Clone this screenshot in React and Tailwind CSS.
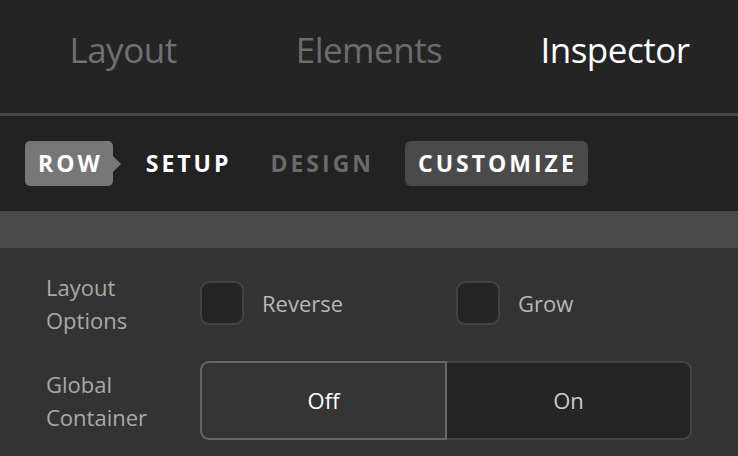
export default function App() {
  const font = { fontFamily: '"Open Sans", "Liberation Sans", sans-serif' };
  return (
    <div className="w-[738px] h-[456px] overflow-hidden bg-[#333333] flex flex-col" style={font}>
      {/* top navigation */}
      <div className="h-[113px] bg-[#242424] grid grid-cols-3 items-start pt-[26px]">
        <div className="text-center text-[35px] leading-[48px] tracking-[-0.5px] text-[#707070]">Layout</div>
        <div className="text-center text-[35px] leading-[48px] tracking-[-0.5px] text-[#6c6c6c]">Elements</div>
        <div className="text-center text-[35px] leading-[48px] tracking-[-0.5px] text-white">Inspector</div>
      </div>
      <div className="h-[3px] bg-[#474747]" />

      {/* breadcrumb / sub tabs */}
      <div className="h-[95px] bg-[#222222] flex items-center pl-[25px]">
        <div className="relative h-[45px] flex items-center rounded-[5px] bg-[#777777] pl-[13px] pr-[10px]">
          <span className="text-[23px] font-bold tracking-[3px] text-white">ROW</span>
          <span className="absolute right-[-8px] top-1/2 -translate-y-1/2 w-0 h-0 border-y-[8px] border-y-transparent border-l-[8px] border-l-[#777777]" />
        </div>
        <div className="h-[45px] flex items-center ml-[33px]">
          <span className="text-[23px] font-bold tracking-[3px] text-white">SETUP</span>
        </div>
        <div className="h-[45px] flex items-center ml-[39px]">
          <span className="text-[23px] font-bold tracking-[3px] text-[#6a6a6a]">DESIGN</span>
        </div>
        <div className="h-[45px] flex items-center ml-[31px] rounded-[6px] bg-[#4a4a4a] pl-[13px] pr-[11px]">
          <span className="text-[23px] font-bold tracking-[3px] text-white">CUSTOMIZE</span>
        </div>
      </div>
      <div className="h-[37px] bg-[#494949]" />

      {/* options */}
      <div className="flex-1 flex flex-col pl-[46px] pt-[23px]">
        <div className="flex items-start">
          <div className="w-[154px] text-[22px] leading-[33px] text-[#a9a9a9]">
            Layout
            <br />
            Options
          </div>
          <div className="flex items-center mt-[10px]">
            <div className="w-[256px] flex items-center">
              <div className="w-[44px] h-[44px] rounded-[9px] border-2 border-[#434343] bg-[#252525]" />
              <span className="ml-[18px] text-[22px] text-[#b8b8b8]">Reverse</span>
            </div>
            <div className="flex items-center">
              <div className="w-[44px] h-[44px] rounded-[9px] border-2 border-[#434343] bg-[#252525]" />
              <span className="ml-[18px] text-[22px] text-[#b8b8b8]">Grow</span>
            </div>
          </div>
        </div>

        <div className="flex items-start mt-[24px]">
          <div className="w-[154px] text-[22px] leading-[33px] text-[#a9a9a9] pt-[7px]">
            Global
            <br />
            Container
          </div>
          <div className="flex w-[492px] h-[79px]">
            <button className="flex-1 flex items-center justify-center rounded-l-[9px] border-2 border-[#676767] bg-[#353535] text-[22px] text-white">
              Off
            </button>
            <button className="flex-1 flex items-center justify-center rounded-r-[9px] border-2 border-l-0 border-[#444444] bg-[#252525] text-[22px] text-[#cccccc]">
              On
            </button>
          </div>
        </div>
      </div>
    </div>
  );
}
